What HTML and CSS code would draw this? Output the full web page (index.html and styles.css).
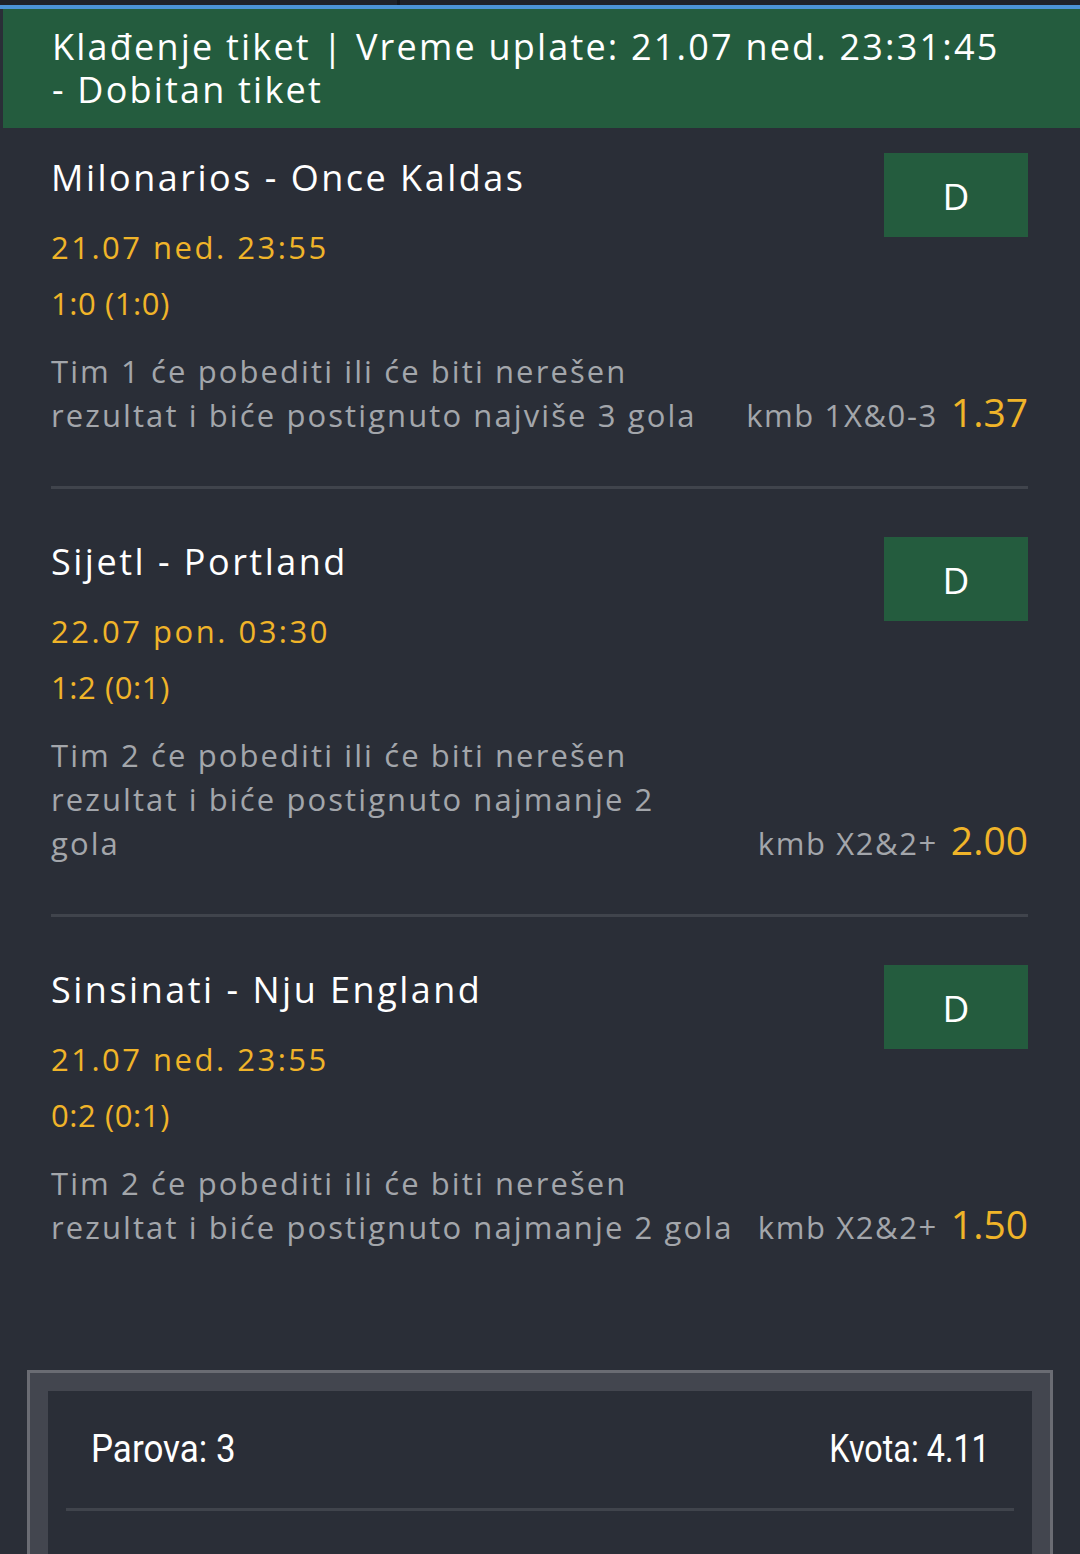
FILE: index.html
```html
<!DOCTYPE html>
<html lang="sr">
<head>
<meta charset="utf-8">
<title>Klađenje tiket</title>
<link rel="stylesheet" href="styles.css">
</head>
<body>
<div class="topbar"><div class="topbar-split"></div></div>
<div class="accent"></div>
<header class="ticket-head">
  <h1 class="ticket-title">Klađenje tiket | Vreme uplate: 21.07 ned. 23:31:45<br>- Dobitan tiket</h1>
</header>

<main class="matches">
  <section class="match">
    <div class="match-top">
      <div class="match-info">
        <h2 class="match-name">Milonarios - Once Kaldas</h2>
        <div class="match-date">21.07 ned. 23:55</div>
        <div class="match-score">1:0 (1:0)</div>
      </div>
      <div class="status">D</div>
    </div>
    <div class="match-bet">
      <p class="bet-desc"><span class="ln">Tim 1 će pobediti ili će biti nerešen</span><span class="ln">rezultat i biće postignuto najviše 3 gola</span></p>
      <div class="bet-odds"><span class="bet-code">kmb 1X&amp;0-3</span><span class="bet-value">1.37</span></div>
    </div>
  </section>

  <section class="match">
    <div class="match-top">
      <div class="match-info">
        <h2 class="match-name">Sijetl - Portland</h2>
        <div class="match-date">22.07 pon. 03:30</div>
        <div class="match-score">1:2 (0:1)</div>
      </div>
      <div class="status">D</div>
    </div>
    <div class="match-bet">
      <p class="bet-desc"><span class="ln">Tim 2 će pobediti ili će biti nerešen</span><span class="ln">rezultat i biće postignuto najmanje 2</span><span class="ln">gola</span></p>
      <div class="bet-odds"><span class="bet-code">kmb X2&amp;2+</span><span class="bet-value">2.00</span></div>
    </div>
  </section>

  <section class="match">
    <div class="match-top">
      <div class="match-info">
        <h2 class="match-name">Sinsinati - Nju England</h2>
        <div class="match-date">21.07 ned. 23:55</div>
        <div class="match-score">0:2 (0:1)</div>
      </div>
      <div class="status">D</div>
    </div>
    <div class="match-bet">
      <p class="bet-desc"><span class="ln">Tim 2 će pobediti ili će biti nerešen</span><span class="ln">rezultat i biće postignuto najmanje 2 gola</span></p>
      <div class="bet-odds"><span class="bet-code">kmb X2&amp;2+</span><span class="bet-value">1.50</span></div>
    </div>
  </section>
</main>

<section class="summary">
  <div class="summary-inner">
    <div class="summary-row">
      <span class="sum-left">Parova: 3</span>
      <span class="sum-right">Kvota: 4.11</span>
    </div>
    <div class="summary-rule"></div>
  </div>
</section>
</body>
</html>
```

FILE: styles.css
```css
* { box-sizing: border-box; }

html, body {
  margin: 0;
  padding: 0;
}

body {
  background: #2a2e37;
  font-family: "Open Sans", Lato, sans-serif;
  color: #ffffff;
  width: 1080px;
  height: 1554px;
  overflow: hidden;
}

.topbar {
  height: 5px;
  background: #1f2229;
}
.topbar-split {
  margin-left: 397px;
  width: 3px;
  height: 5px;
  background: #15171c;
}

.accent {
  height: 4px;
  background: #4b93d6;
}

.ticket-head {
  background: #245c3e;
  margin-left: 3px;
  height: 119px;
  padding: 16px 0 0 49px;
}

.ticket-title {
  margin: 0;
  font-weight: 400;
  font-size: 36px;
  line-height: 43px;
  letter-spacing: 2.2px;
  color: #ffffff;
}

.matches {
  padding: 25px 52px 0 51px;
}

.match {
  border-bottom: 3px solid #40444c;
  padding-bottom: 48px;
  margin-bottom: 48px;
}
.match:last-child {
  border-bottom: none;
  padding-bottom: 0;
  margin-bottom: 0;
}

.match-top {
  display: flex;
  justify-content: space-between;
  align-items: flex-start;
}

.match-name {
  margin: 0;
  font-weight: 400;
  font-size: 36px;
  line-height: 50px;
  letter-spacing: 2.5px;
  color: #ffffff;
}

.match-date {
  margin-top: 22px;
  font-size: 31px;
  line-height: 44px;
  letter-spacing: 2.5px;
  color: #f0b429;
}

.match-score {
  margin-top: 12px;
  font-size: 31px;
  line-height: 44px;
  letter-spacing: 0.6px;
  color: #f0b429;
}

.status {
  width: 144px;
  height: 84px;
  background: #245c3e;
  color: #ffffff;
  font-size: 37px;
  display: flex;
  align-items: center;
  justify-content: center;
}

.match-bet {
  margin-top: 24px;
  display: flex;
  justify-content: space-between;
  align-items: last baseline;
  gap: 10px;
}

.bet-desc {
  margin: 0;
  font-size: 31px;
  line-height: 44px;
  letter-spacing: 2.1px;
  color: #a3a6ab;
}
.ln {
  display: block;
  white-space: nowrap;
}

.bet-odds {
  white-space: nowrap;
}
.bet-code {
  font-size: 31px;
  letter-spacing: 1.6px;
  color: #a3a6ab;
}
.bet-value {
  margin-left: 13px;
  font-size: 39px;
  color: #f0b429;
}

.summary {
  margin: 120px 27px 0 27px;
  border: 3px solid #6a6c73;
  border-bottom: none;
  background: #43464f;
  padding: 18px 18px 0 18px;
  height: 200px;
}

.summary-inner {
  background: #2a2e37;
  height: 200px;
  padding: 0 18px;
}

.summary-row {
  display: flex;
  justify-content: space-between;
  padding: 36px 24px 0 25px;
  height: 117px;
  font-family: Roboto, "Liberation Sans", sans-serif;
  font-size: 38px;
  line-height: 44px;
  color: #ffffff;
}
.sum-left {
  display: inline-block;
  transform: scaleX(0.92);
  transform-origin: left center;
}
.sum-right {
  display: inline-block;
  transform: scaleX(0.85);
  transform-origin: right center;
}

.summary-rule {
  height: 3px;
  background: #40444c;
}
```
